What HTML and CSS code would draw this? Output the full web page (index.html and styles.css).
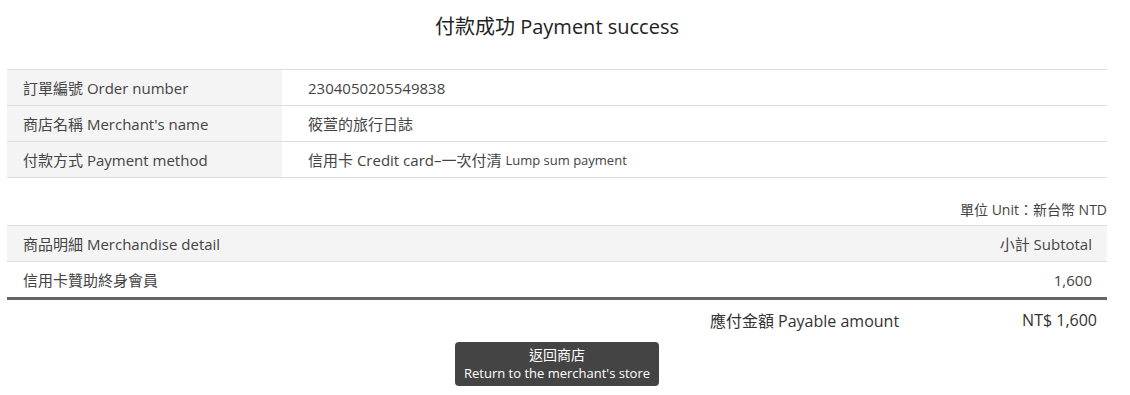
FILE: index.html
```html
<!DOCTYPE html>
<html lang="zh-Hant">
<head>
<meta charset="utf-8">
<title>付款成功 Payment success</title>
<link rel="stylesheet" href="styles.css">
</head>
<body>
<div class="page">
  <h1 class="title">付款成功 Payment success</h1>

  <div class="info">
    <div class="info-row">
      <div class="info-label">訂單編號 Order number</div>
      <div class="info-value">2304050205549838</div>
    </div>
    <div class="info-row">
      <div class="info-label">商店名稱 Merchant's name</div>
      <div class="info-value">筱萱的旅行日誌</div>
    </div>
    <div class="info-row">
      <div class="info-label">付款方式 Payment method</div>
      <div class="info-value">信用卡 Credit card–一次付清 <span class="small">Lump sum payment</span></div>
    </div>
  </div>

  <div class="unit">單位 Unit：新台幣 NTD</div>

  <div class="detail">
    <div class="detail-row detail-head">
      <div class="detail-name">商品明細 Merchandise detail</div>
      <div class="detail-amt">小計 Subtotal</div>
    </div>
    <div class="detail-row detail-last">
      <div class="detail-name">信用卡贊助終身會員</div>
      <div class="detail-amt">1,600</div>
    </div>
  </div>

  <div class="payable">
    <div class="payable-label">應付金額 Payable amount</div>
    <div class="payable-amt">NT$ 1,600</div>
  </div>

  <div class="actions">
    <a class="btn" href="#">
      <span class="btn-zh">返回商店</span>
      <span class="btn-en">Return to the merchant's store</span>
    </a>
  </div>
</div>
</body>
</html>
```

FILE: styles.css
```css
* { box-sizing: border-box; }

body {
  margin: 0;
  background: #fff;
  color: #444;
  font-family: "Open Sans", "Noto Sans CJK TC", sans-serif;
}

.page {
  width: 1100px;
  margin: 0 0 0 7px;
}

.title {
  margin: 0;
  padding-top: 12px;
  height: 69px;
  text-align: center;
  font-size: 20px;
  font-weight: 400;
  line-height: 30px;
  color: #222;
}

.info {
  border-top: 1px solid #ddd;
}

.info-row {
  display: flex;
  height: 36px;
  border-bottom: 1px solid #ddd;
  font-size: 15px;
}

.info-label {
  width: 275px;
  background: #f4f4f4;
  padding-left: 16px;
  display: flex;
  align-items: center;
}

.info-value {
  padding-left: 26px;
  display: flex;
  align-items: center;
  gap: 4px;
}

.small {
  font-size: 13px;
}

.unit {
  text-align: right;
  font-size: 14px;
  height: 47px;
  padding-top: 22px;
  line-height: 20px;
}

.detail {
  border-top: 1px solid #ddd;
}

.detail-row {
  display: flex;
  justify-content: space-between;
  align-items: center;
  height: 36px;
  padding: 0 15px 0 16px;
  font-size: 15px;
  border-bottom: 1px solid #ddd;
}

.detail-head {
  background: #f4f4f4;
}

.detail-last {
  border-bottom: 3px solid #666;
  height: 38px;
}

.payable {
  display: flex;
  justify-content: flex-end;
  align-items: center;
  height: 40px;
  margin-bottom: 2px;
  font-size: 16px;
  color: #333;
  padding-right: 10px;
}

.payable-amt {
  margin-left: 123px;
}

.actions {
  display: flex;
  justify-content: center;
}

.btn {
  display: flex;
  flex-direction: column;
  align-items: center;
  width: 204px;
  height: 44px;
  background: #444;
  border-radius: 4px;
  color: #fff;
  text-decoration: none;
  padding-top: 4px;
}

.btn-zh {
  font-size: 14px;
  line-height: 18px;
}

.btn-en {
  font-size: 13px;
  line-height: 18px;
}
```
